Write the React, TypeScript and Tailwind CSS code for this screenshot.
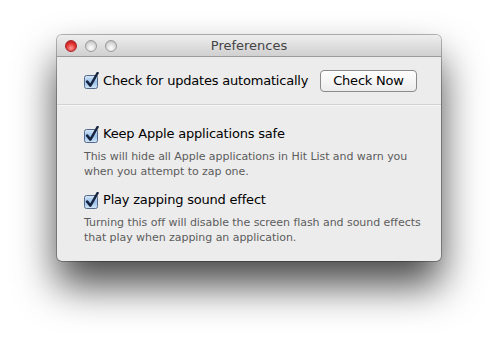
import React from 'react';

const font = { fontFamily: '"Lucida Grande", "DejaVu Sans", sans-serif' };

const Checkbox: React.FC = () => (
  <svg width="16" height="17" viewBox="0 0 16 17" className="shrink-0">
    <defs>
      <linearGradient id="cbg" x1="0" y1="0" x2="0" y2="1">
        <stop offset="0" stopColor="#d9e9f9" />
        <stop offset="0.5" stopColor="#98c0ea" />
        <stop offset="1" stopColor="#d3e7fa" />
      </linearGradient>
    </defs>
    <rect x="0.5" y="3.5" width="13" height="13" rx="2" fill="url(#cbg)" stroke="#56698a" />
    <path d="M3.2 9.6 L6.4 13.6 L13.6 1" fill="none" stroke="#17243f" strokeWidth="2.5" strokeLinecap="round" strokeLinejoin="round" />
  </svg>
);

const Light: React.FC<{ red?: boolean }> = ({ red }) => (
  <div
    className={
      red
        ? 'h-[12px] w-[12px] rounded-full border border-[#a3252a] bg-[radial-gradient(circle_at_50%_70%,#ff9a95,#e0302c_55%,#a8151a)]'
        : 'h-[12px] w-[12px] rounded-full border border-[#9a9a9a] bg-[radial-gradient(circle_at_50%_70%,#ffffff,#d9d9d9_55%,#b0b0b0)]'
    }
  />
);

const App: React.FC = () => {
  return (
    <div className="h-[340px] w-[498px] bg-white pl-[57px] pt-[35px]" style={font}>
      <div className="h-[226px] w-[384px] overflow-hidden rounded-[5px] bg-[#ececec] shadow-[0_0_0_1px_rgba(0,0,0,0.28),0_24px_40px_rgba(0,0,0,0.72)]">
        {/* title bar */}
        <div className="relative flex h-[22px] items-center border-b border-[#9c9c9c] bg-gradient-to-b from-[#eeeeee] to-[#d0d0d0] pl-[8px]">
          <div className="flex gap-[8px]">
            <Light red />
            <Light />
            <Light />
          </div>
          <div className="absolute inset-0 flex items-center justify-center text-[13px] text-[#444]">
            Preferences
          </div>
        </div>

        {/* updates */}
        <div className="flex h-[48px] items-center justify-between border-b border-[#d2d2d2] pl-[27px] pr-[24px]">
          <div className="flex items-center gap-[3px] text-[13px] tracking-[-0.2px] text-black">
            <Checkbox />
            <span>Check for updates automatically</span>
          </div>
          <button className="h-[22px] w-[97px] rounded-[4px] border border-[#8a8a8a] bg-gradient-to-b from-white to-[#ececec] text-[13px] tracking-[-0.2px] text-black">
            Check Now
          </button>
        </div>

        {/* options */}
        <div className="border-t border-[#f6f6f6] pl-[27px] pr-[16px] pt-[19px]">
          <div className="flex h-[18px] items-center gap-[3px] text-[13px] tracking-[-0.2px] text-black">
            <Checkbox />
            <span>Keep Apple applications safe</span>
          </div>
          <p className="mt-[6px] text-[11px] leading-[15px] tracking-[-0.05px] text-[#5c5c5c]">
            This will hide all Apple applications in Hit List and warn you
            <br />
            when you attempt to zap one.
          </p>
          <div className="mt-[12px] flex h-[18px] items-center gap-[3px] text-[13px] tracking-[-0.2px] text-black">
            <Checkbox />
            <span>Play zapping sound effect</span>
          </div>
          <p className="mt-[6px] text-[11px] leading-[15px] tracking-[-0.05px] text-[#5c5c5c]">
            Turning this off will disable the screen flash and sound effects
            <br />
            that play when zapping an application.
          </p>
        </div>
      </div>
    </div>
  );
};

export default App;
